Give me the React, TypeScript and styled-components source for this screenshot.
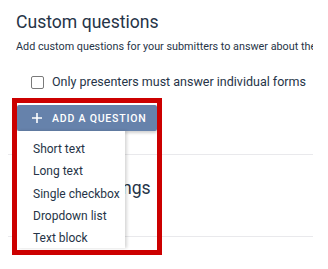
import React from "react";
import styled, { createGlobalStyle } from "styled-components";

const Global = createGlobalStyle`
  html, body { margin: 0; padding: 0; background: #fff; }
  body { font-family: Roboto, "Noto Sans", Arial, sans-serif; color: #263447; overflow: hidden; }
`;

const Page = styled.div`
  width: 328px;
  height: 269px;
  overflow: hidden;
  padding: 0 15px 0 8px;
  box-sizing: border-box;
`;

const Section = styled.section`
  padding: 10px 0 0 8px;
`;

const Heading = styled.h2`
  margin: 0;
  font-size: 17.6px;
  font-weight: 400;
  line-height: 24px;
  color: #263447;
  white-space: nowrap;
`;

const Description = styled.p`
  margin: 5px 0 0;
  font-size: 10.8px;
  line-height: 16px;
  white-space: nowrap;
  overflow: hidden;
  color: #263447;
`;

const CheckRow = styled.label`
  display: flex;
  align-items: center;
  gap: 8px;
  margin: 18px 0 0 15px;
  font-size: 12.5px;
  letter-spacing: 0;
  line-height: 18px;
  white-space: nowrap;
`;

const Box = styled.span`
  width: 11px;
  height: 11px;
  border: 1px solid #7a7a7a;
  border-radius: 2px;
  flex: none;
`;

const ButtonWrap = styled.div`
  position: relative;
  width: 140px;
  margin: 14px 0 23px 1px;
`;

const AddButton = styled.button`
  display: flex;
  align-items: center;
  gap: 10px;
  width: 140px;
  height: 26px;
  padding: 0 0 0 15px;
  box-sizing: border-box;
  border: none;
  border-radius: 2px;
  background: #6682ab;
  color: #fff;
  font-family: Roboto, Arial, sans-serif;
  font-size: 10.5px;
  font-weight: 500;
  letter-spacing: 0.8px;
  white-space: nowrap;
  box-shadow: 0 2px 3px rgba(0, 0, 0, 0.18);
  cursor: pointer;
`;

const Menu = styled.ul`
  position: absolute;
  top: 26px;
  left: 0;
  width: 108px;
  margin: 0;
  padding: 7px 0 0;
  height: 117px;
  box-sizing: border-box;
  list-style: none;
  background: #fff;
  box-shadow: 2px 0 3px rgba(0, 0, 0, 0.16);
  z-index: 2;
`;

const Item = styled.li`
  height: 22.3px;
  line-height: 22px;
  padding-left: 16px;
  font-size: 12px;
  color: #263447;
  white-space: nowrap;
`;

const Highlight = styled.div`
  position: absolute;
  top: -7px;
  left: -5px;
  width: 150px;
  height: 157px;
  box-sizing: border-box;
  border: 5px solid #cc0000;
  pointer-events: none;
  z-index: 3;
`;

const SettingsSection = styled.section`
  padding: 21px 0 36px 8px;
  border-top: 1px solid #e9e9ec;
  border-bottom: 1px solid #e9e9ec;
`;

const Plus = () => (
  <svg width="10" height="10" viewBox="0 0 10 10">
    <path d="M5 0v10M0 5h10" stroke="#fff" strokeWidth="1.6" />
  </svg>
);

export default function App() {
  const items = ["Short text", "Long text", "Single checkbox", "Dropdown list", "Text block"];
  return (
    <Page>
      <Global />
      <Section>
        <Heading>Custom questions</Heading>
        <Description>Add custom questions for your submitters to answer about their submissions.</Description>
        <CheckRow>
          <Box />
          Only presenters must answer individual forms
        </CheckRow>
        <ButtonWrap>
          <AddButton>
            <Plus />
            ADD A QUESTION
          </AddButton>
          <Menu>
            {items.map((t) => (
              <Item key={t}>{t}</Item>
            ))}
          </Menu>
          <Highlight />
        </ButtonWrap>
      </Section>
      <SettingsSection>
        <Heading>Program settings</Heading>
      </SettingsSection>
    </Page>
  );
}
